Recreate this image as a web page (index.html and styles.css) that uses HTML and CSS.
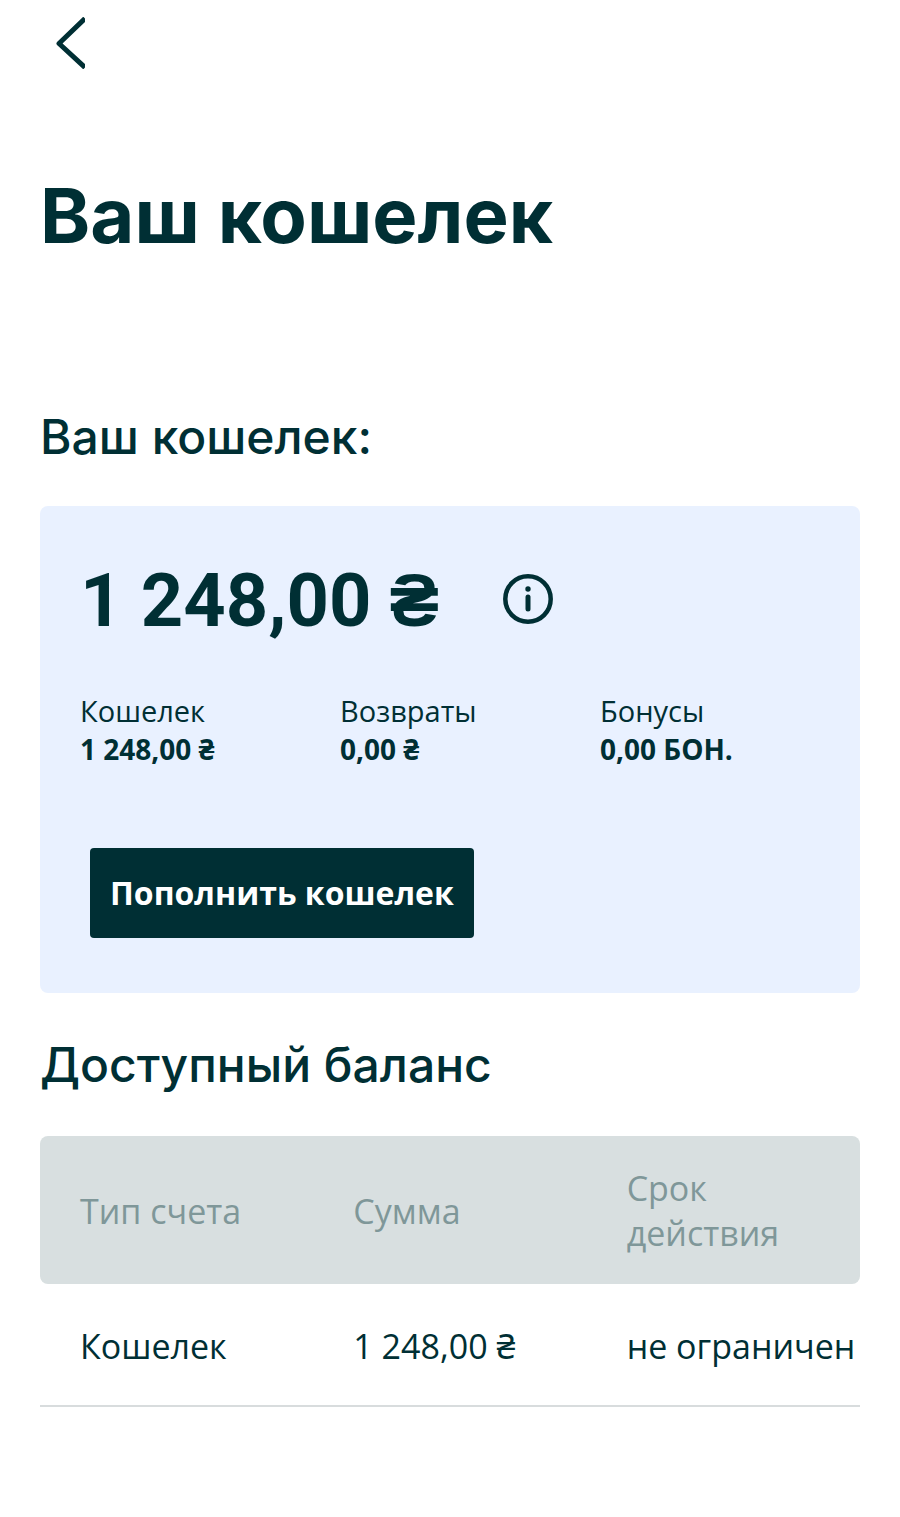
FILE: index.html
```html
<!DOCTYPE html>
<html lang="ru">
<head>
<meta charset="utf-8">
<meta name="viewport" content="width=device-width, initial-scale=1">
<title>Ваш кошелек</title>
<link rel="stylesheet" href="styles.css">
</head>
<body>
<header class="topbar">
  <button class="icon-button" type="button" aria-label="Назад">
    <svg width="30" height="52" viewBox="0 0 30 52" fill="none" stroke="currentColor" stroke-width="5" stroke-linejoin="round"><path d="M30 1.500 4 26.500 30 50.500"/></svg>
  </button>
</header>
<main class="page">
  <h1 class="title">Ваш кошелек</h1>
  <section>
    <h2 class="heading">Ваш кошелек:</h2>
    <div class="card">
      <div class="total">
        <strong class="amount">1 248,00 ₴</strong>
        <button class="icon-button" type="button" aria-label="Информация">
          <svg width="50" height="50" viewBox="0 0 50 50" fill="none" stroke="currentColor" stroke-width="4.500"><circle cx="25" cy="25" r="22.700"/><path d="M25 23V35" stroke-width="5" stroke-linecap="round"/><circle cx="25" cy="15" r="2.700" fill="currentColor" stroke="none"/></svg>
        </button>
      </div>
      <dl class="parts">
        <div><dt>Кошелек</dt><dd>1 248,00 ₴</dd></div>
        <div><dt>Возвраты</dt><dd>0,00 ₴</dd></div>
        <div><dt>Бонусы</dt><dd>0,00 БОН.</dd></div>
      </dl>
      <button class="topup" type="button">Пополнить кошелек</button>
    </div>
  </section>
  <section>
    <h2 class="heading balance-heading">Доступный баланс</h2>
    <table class="balance">
      <thead><tr><th scope="col">Тип счета</th><th scope="col">Сумма</th><th scope="col">Срок действия</th></tr></thead>
      <tbody><tr><td>Кошелек</td><td>1 248,00 ₴</td><td>не ограничен</td></tr></tbody>
    </table>
  </section>
</main>
</body>
</html>
```
FILE: styles.css
```css
* { box-sizing: border-box; }
body { margin: 0; background: #fff; color: #002f34; font-family: "Open Sans", "Noto Sans", sans-serif; }
.icon-button { display: flex; padding: 0; border: 0; background: none; color: inherit; cursor: pointer; }
.topbar { padding: 17px 55px 0; }
.page { padding: 0 40px 40px; }
.title { margin: 96px 0 0; font: 700 76px/100px Inter, sans-serif; }
.heading { margin: 140px 0 0; font: 500 48px/64px Inter, sans-serif; }
.card { margin-top: 37px; padding: 40px 40px 55px; border-radius: 8px; background: #e9f1ff; }
.total { display: flex; align-items: center; gap: 64px; }
.amount { padding-top: 4px; font: 700 74px/102px Roboto, sans-serif; }
.parts { display: grid; grid-template-columns: repeat(3, 1fr); margin: 40px -40px 0 0; font-size: 29px; line-height: 38px; }
.parts dd { margin: 0; font-size: 28px; font-weight: 700; }
.topup { margin: 80px 0 0 10px; height: 90px; padding: 0 20px; border: 0; border-radius: 4px; background: #002f34; color: #fff; font: 700 32px/44px "Open Sans", sans-serif; }
.balance-heading { margin-top: 40px; }
.balance { width: 100%; margin-top: 39px; border-spacing: 0; table-layout: fixed; font-size: 34px; line-height: 45px; text-align: left; }
.balance th { padding: 30px 40px 28px; background: #d8dfe0; color: #7f9799; font-weight: 400; }
.balance th:first-child { border-radius: 8px 0 0 8px; }
.balance th:last-child { border-radius: 0 8px 8px 0; }
.balance td { padding: 40px 0 36px 40px; border-bottom: 2px solid #d8dcdd; white-space: nowrap; }
```
